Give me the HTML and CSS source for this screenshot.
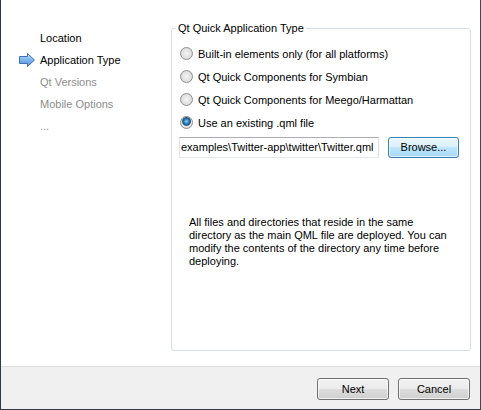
FILE: index.html
```html
<!DOCTYPE html>
<html>
<head>
<meta charset="utf-8">
<link rel="stylesheet" href="styles.css">
</head>
<body>
<div class="window">
  <div class="content">
    <ul class="steps">
      <li class="step done">Location</li>
      <li class="step current">
        <svg class="arrow" width="16" height="15" viewBox="0 0 16 15">
          <defs>
            <linearGradient id="ag" x1="0" y1="0" x2="0" y2="1">
              <stop offset="0" stop-color="#bcdcfb"/>
              <stop offset="0.5" stop-color="#7fb4ec"/>
              <stop offset="1" stop-color="#4d8fda"/>
            </linearGradient>
          </defs>
          <path d="M0.5 3.5 H8.5 V0.5 L15.5 7 L8.5 13.5 V10.5 H0.5 Z" fill="url(#ag)" stroke="#3f72b8" stroke-width="1" stroke-linejoin="round"/>
        </svg>
        Application Type
      </li>
      <li class="step">Qt Versions</li>
      <li class="step">Mobile Options</li>
      <li class="step">...</li>
    </ul>
    <div class="main">
      <fieldset class="group">
        <legend class="group-title">Qt Quick Application Type</legend>
        <div class="options">
          <label class="option"><span class="radio"></span>Built-in elements only (for all platforms)</label>
          <label class="option"><span class="radio"></span>Qt Quick Components for Symbian</label>
          <label class="option"><span class="radio"></span>Qt Quick Components for Meego/Harmattan</label>
          <label class="option"><span class="radio checked"></span>Use an existing .qml file</label>
        </div>
        <div class="file-row">
          <div class="line-edit">examples\Twitter-app\twitter\Twitter.qml</div>
          <div class="btn btn-focus">Browse...</div>
        </div>
        <p class="note">All files and directories that reside in the same directory as the main QML file are deployed. You can modify the contents of the directory any time before deploying.</p>
      </fieldset>
    </div>
  </div>
  <div class="footer">
    <div class="btn btn-footer">Next</div>
    <div class="btn btn-footer">Cancel</div>
  </div>
</div>
</body>
</html>
```

FILE: styles.css
```css
html, body {
  margin: 0;
  padding: 0;
  background: #ffffff;
}
body {
  font-family: "Liberation Sans", Arial, sans-serif;
  font-size: 11px;
  color: #000000;
}
.window {
  width: 479px;
  height: 409px;
  border-left: 1px solid #2d3b48;
  border-right: 1px solid #3b4a57;
  border-bottom: 1px solid #2d3b48;
  display: flex;
  flex-direction: column;
  background: #ffffff;
}
.content {
  height: 367px;
  display: flex;
  border-bottom: 1px solid #dfdfdf;
  box-sizing: border-box;
}
.steps {
  list-style: none;
  margin: 0;
  padding: 27px 0 0 39px;
  width: 170px;
  box-sizing: border-box;
}
.step {
  position: relative;
  height: 22px;
  line-height: 22px;
  color: #8d8d8d;
  white-space: nowrap;
}
.step.done, .step.current {
  color: #000000;
}
.arrow {
  position: absolute;
  left: -21px;
  top: 4px;
}
.main {
  padding-top: 21px;
}
.group {
  margin: 0;
  width: 300px;
  height: 330px;
  box-sizing: border-box;
  border: 1px solid #d5dfe5;
  border-radius: 3px;
  padding: 7px 0 0 7px;
}
.group-title {
  padding: 0 2px;
  margin-left: -3px;
  line-height: 14px;
}
.options {
  display: flex;
  flex-direction: column;
}
.option {
  display: flex;
  align-items: center;
  height: 23px;
  gap: 5px;
}
.radio {
  width: 11px;
  height: 11px;
  border-radius: 50%;
  border: 1px solid #8e8f8f;
  background: radial-gradient(circle at 50% 50%, #f4f4f4 0, #e2e2e2 55%, #c8c8c8 100%);
  margin-left: 1px;
}
.radio.checked {
  background: radial-gradient(circle at 50% 40%, #8ad3f5 0, #2d7ab5 30%, #15507f 45%, #e6e6e6 58%, #d0d0d0 100%);
}
.file-row {
  display: flex;
  gap: 9px;
  margin-top: 3px;
}
.line-edit {
  width: 200px;
  height: 21px;
  box-sizing: border-box;
  border: 1px solid #abadb3;
  border-color: #abadb3 #dbdfe6 #e3e9ef #e2e3ea;
  line-height: 19px;
  padding-left: 1px;
  overflow: hidden;
  white-space: nowrap;
}
.btn {
  box-sizing: border-box;
  height: 21px;
  border-radius: 3px;
  text-align: center;
  line-height: 19px;
}
.btn-focus {
  width: 71px;
  border: 1px solid #3c7fb1;
  background: linear-gradient(#eaf6fd 0, #d9f0fc 50%, #bee6fd 50%, #a7d9f5 100%);
  box-shadow: inset 0 0 0 1px rgba(255,255,255,0.6);
}
.note {
  margin: 58px 0 0 10px;
  width: 268px;
  line-height: 13px;
}
.footer {
  flex: 1;
  background: #f0f0f0;
  display: flex;
  justify-content: flex-end;
  align-items: flex-start;
  gap: 9px;
  padding: 11px 10px 0 0;
}
.btn-footer {
  width: 72px;
  height: 22px;
  line-height: 20px;
  border: 1px solid #707070;
  background: linear-gradient(#f2f2f2 0, #ebebeb 50%, #dddddd 50%, #cfcfcf 100%);
  box-shadow: inset 0 0 0 1px rgba(255,255,255,0.7);
}
```
